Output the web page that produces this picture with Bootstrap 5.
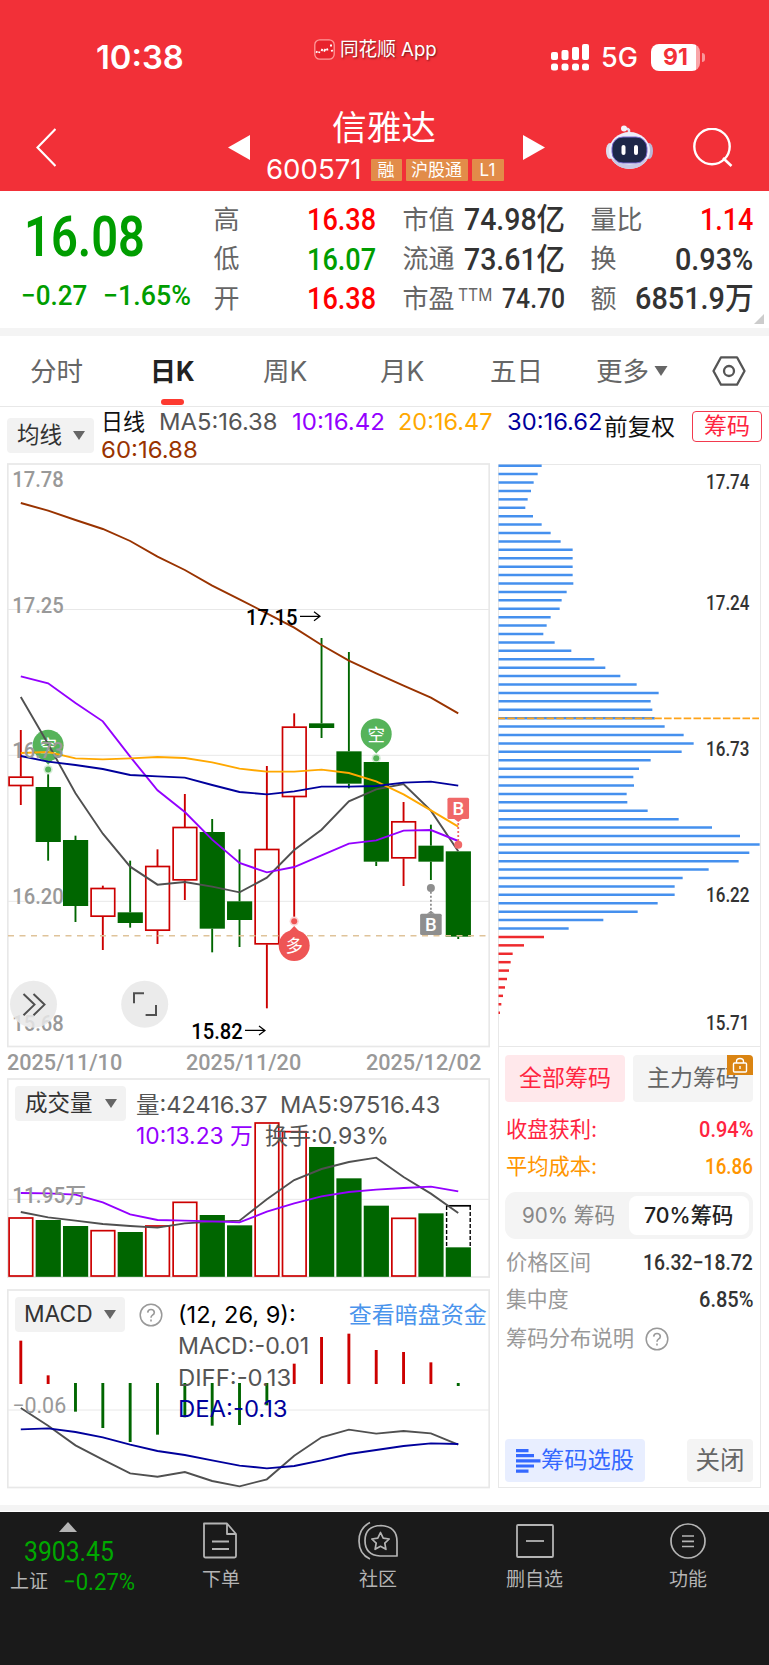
<!DOCTYPE html>
<html lang="zh-CN">
<head>
<meta charset="utf-8">
<meta name="viewport" content="width=device-width, initial-scale=1">
<title>信雅达 600571</title>
<link href="https://cdn.jsdelivr.net/npm/bootstrap@5.3.0/dist/css/bootstrap.min.css" rel="stylesheet">
<style>
  body{width:769px;margin:0;background:#fff;color:#333;font-family:"Inter","Noto Sans CJK SC",sans-serif;line-height:1;overflow-x:hidden}
  .din{font-family:"Roboto","Noto Sans CJK SC",sans-serif;font-weight:500}
  .fit{display:inline-block;white-space:nowrap;transform-origin:left center;flex:none}
  svg{display:block;flex:none}
  svg text{font-family:"Roboto","Noto Sans CJK SC",sans-serif}
  .top{background:#f23038;color:#fff;height:191px}
  .status{height:108px;padding-top:7px;display:grid;grid-template-columns:218px 237px 50px 50px auto;padding-left:96px;align-items:center}
  .time{font-size:32px;font-weight:600}
  .app{font-size:19px;margin-bottom:16px;gap:5px;text-shadow:1px 1px 2px #0008}
  .g5{font-size:27px;font-weight:500}
  .batt{width:49px;height:27px;border-radius:8px;background:linear-gradient(90deg,#fff 92%,#f9a5a8 92%);color:#f23038;font-size:23px;font-weight:700;line-height:27px}
  .cap{width:3px;height:9px;border-radius:0 4px 4px 0;background:#f9979b;margin-left:2px}
  .navrow{height:83px;display:grid;grid-template-columns:192px 38px 257px 83px 87px auto;padding-left:36px}
  .navrow>svg{align-self:center;margin-bottom:5px}
  .name{font-size:34px;line-height:40px;width:235px}
  .code{font-size:27px;line-height:24px;margin-top:10px}
  .tag{background:#e28c49;font-size:17px;line-height:22px;height:22px;text-align:center;border-radius:1px;flex:none}
  .up{color:#f00}.down{color:#009d00}
  .quote{height:137px;display:grid;grid-template-columns:193px 163px 163px 163px;padding-left:20.500px;position:relative}
  .quote .cols{padding-top:9px}
  .qrow{height:39.5px;display:flex;align-items:center;justify-content:space-between;font-size:26px;color:#666}
  .qrow .din{font-size:31px;color:#333}
  .qrow .up{color:#f00}.qrow .down{color:#009d00}
  .big{font-size:56px;line-height:60px;margin:16px 0 0 3px}
  .din.big{font-weight:600}
  .chg{font-size:28px;line-height:30px;margin-top:14px;gap:16px}
  .corner{position:absolute;right:5px;bottom:4px;border-left:10px solid transparent;border-bottom:10px solid #ccc}
  .band{background:#f4f4f4}
  .tabs{height:71px;border-bottom:1px solid #e8e8e8;display:grid;grid-template-columns:120px 113px 117px 110px 106px 116px auto;padding-left:30px;align-items:center;font-size:26.5px;color:#666}
  .tabs .on{color:#222;font-weight:700;position:relative}
  .tabs .on i{position:absolute;left:11px;bottom:-21px;width:23px;height:6px;border-radius:3px;background:#fd3a30}
  .marow{height:56px;padding:3px 7px 0 7px}
  .pick{background:#f2f2f2;border-radius:4px;height:35px;font-size:22.5px;color:#333;display:flex;align-items:center;justify-content:space-between;padding:0 9px 0 10px;flex:none}
  .malist{margin-left:7px;width:503px;font-size:23px;line-height:28px;color:#555}
  .adj{font-size:23px;color:#111;line-height:34px}
  .chip{margin-left:17px;width:70px;height:31px;border:1.5px solid #f23a4e;border-radius:4px;color:#ff2440;font-size:23px;line-height:28px;text-align:center;margin-top:1px}
  .left{width:483px}
  .dates{height:29px;font-size:22px;color:#999;line-height:27px;padding-right:9px}
  .pane{height:200px;position:relative}
  .pane>svg{position:absolute;left:0;top:0}
  .over{position:relative;padding:8px 0 0 8px;font-size:23px;color:#555}
  .lg{line-height:31.4px;margin-left:10px}
  .right{width:263px;margin-left:8px}
  .chipbox{border:1px solid #e8e8e8;border-top-width:1.5px;height:442px;padding:8px 7px 0 6px}
  .cb{height:47px;width:120px;border-radius:4px;font-size:23px;line-height:47px;text-align:center;background:#f4f4f4;color:#666;position:relative}
  .cb.on{background:#ffe8eb;color:#ff2440}
  .lock{position:absolute;right:0;top:0;width:26px;height:20px;background:#da8412;border-radius:0 4px 0 0}
  .kv{height:37px;font-size:21.5px;color:#999;padding:0 0 0 1px}
  .kv .din{color:#333;font-size:21.5px}
  .seg{height:47px;border-radius:11px;background:#f4f4f4;padding:4px;font-size:21.5px;color:#888}
  .seg>div{width:120px;line-height:39px;text-align:center;border-radius:8px}
  .seg>.on{background:#fff;color:#222;font-weight:500}
  .pickbtn{height:43px;border-radius:4px;background:#e8eeff;color:#3468ff;font-size:23px;width:140px;padding-left:11px}
  .closebtn{height:43px;border-radius:4px;background:#f4f4f4;color:#666;font-size:24.5px;width:66px}
  .foot{height:153px;background:#1a1a1a;color:#b4b4b4;font-size:19px}
  .foot .item{padding-top:8px}
  .foot .item span{margin-top:8px;line-height:24px}
</style>
</head>
<body>
<header class="top">
  <div class="status">
    <div class="time"><span class="fit" data-w="88">10:38</span></div>
    <div class="app d-flex align-items-center">
      <svg width="21" height="21" viewBox="0 0 21 21"><rect x=".8" y=".8" width="19.4" height="19.4" rx="5" fill="#e8222c" stroke="#ff9a9a" stroke-width="1.3"/><path d="M2 12.500l1.500 1M5 14l.5-1.500M7.500 12l1-2M10 12.500l1.500-2.500M13 9.500l.5 2M16 6.500h2M17.500 11l1 1.500" stroke="#fff" stroke-width="1.9" fill="none"/></svg>
      <span class="fit" data-w="97">同花顺 App</span>
    </div>
    <svg width="38" height="27" viewBox="0 0 38 27" fill="#fff"><rect x="0" y="8" width="7" height="8" rx="2"/><rect x="10.500" y="6" width="7" height="10" rx="2"/><rect x="21" y="3" width="7" height="13" rx="2"/><rect x="31" y="0" width="7" height="16" rx="2"/><rect x="0" y="19.500" width="7" height="7" rx="2.500"/><rect x="10.500" y="19.500" width="7" height="7" rx="2.500"/><rect x="21" y="19.500" width="7" height="7" rx="2.500"/><rect x="31" y="19.500" width="7" height="7" rx="2.500"/></svg>
    <div class="g5"><span class="fit" data-w="37">5G</span></div>
    <div class="d-flex align-items-center"><div class="batt text-center">91</div><div class="cap"></div></div>
  </div>
  <div class="navrow">
    <svg width="20" height="39" viewBox="0 0 20 39"><path d="M19.500 1L1.500 19.500l18 18.500" fill="none" stroke="#fff" stroke-width="2.200"/></svg>
    <svg width="22" height="25" viewBox="0 0 22 25"><path d="M22 0v25L0 12.500z" fill="#fff"/></svg>
    <div>
      <div class="name text-center"><span class="fit" data-w="104">信雅达</span></div>
      <div class="code d-flex align-items-center"><span class="fit" data-w="96">600571</span>
        <span class="tag" style="width:31px;margin-left:9px">融</span><span class="tag" style="width:62px;margin-left:4px">沪股通</span><span class="tag" style="width:32px;margin-left:4px">L1</span></div>
    </div>
    <svg width="22" height="25" viewBox="0 0 22 25"><path d="M0 0v25L22 12.500z" fill="#fff"/></svg>
    <svg width="47" height="44" viewBox="0 0 47 44"><path d="M23 9V5q-1-2-4-1" stroke="#e4e4f2" stroke-width="2.500" fill="none"/><circle cx="18" cy="3.500" r="3" fill="#f4f4fb"/><ellipse cx="4" cy="26" rx="4" ry="8" fill="#dcdcec"/><ellipse cx="43" cy="26" rx="4" ry="8" fill="#b9b9d8"/><ellipse cx="23.500" cy="25.500" rx="20.500" ry="18.500" fill="#eeeefa"/><path d="M5 33q18 13 37 0-6 11-18.500 11T5 33" fill="#c9c9e4"/><rect x="6" y="12" width="35" height="26" rx="11" fill="#1d2748" stroke="#7a6bd0"/><rect x="15.500" y="20" width="4" height="10" rx="2" fill="#fff"/><rect x="28" y="20" width="4" height="10" rx="2" fill="#fff"/></svg>
    <svg width="40" height="39" viewBox="0 0 40 39"><circle cx="19" cy="18.500" r="17.700" fill="none" stroke="#fff" stroke-width="2.400"/><path d="M30 30l8.500 8" stroke="#fff" stroke-width="2.600"/></svg>
  </div>
</header>

<section class="quote">
  <div>
    <div class="din down big"><span class="fit" data-w="121">16.08</span></div>
    <div class="din down chg d-flex"><span class="fit" data-w="66">−0.27</span><span class="fit" data-w="88">−1.65%</span></div>
  </div>
  <div class="cols" style="grid-column:2">
    <div class="qrow"><span>高</span><span class="din up fit" data-w="69">16.38</span></div>
    <div class="qrow"><span>低</span><span class="din down fit" data-w="69">16.07</span></div>
    <div class="qrow"><span>开</span><span class="din up fit" data-w="69">16.38</span></div>
  </div>
  <div class="cols" style="margin-left:26px;width:163px">
    <div class="qrow"><span>市值</span><span class="din fit" data-w="101">74.98亿</span></div>
    <div class="qrow"><span>流通</span><span class="din fit" data-w="101">73.61亿</span></div>
    <div class="qrow"><span>市盈</span><span class="fit" data-w="34" style="font-size:17px;margin-top:-7px;margin-left:3px">TTM</span><span class="din fit ms-auto" data-w="63" style="font-size:27.5px">74.70</span></div>
  </div>
  <div class="cols" style="margin-left:51px;width:163px">
    <div class="qrow"><span>量比</span><span class="din up fit" data-w="53">1.14</span></div>
    <div class="qrow"><span>换</span><span class="din fit" data-w="78">0.93%</span></div>
    <div class="qrow"><span>额</span><span class="din fit" data-w="119">6851.9万</span></div>
  </div>
  <i class="corner"></i>
</section>
<div class="band" style="height:8px"></div>

<nav class="tabs">
  <span>分时</span><span class="on"><span class="fit" data-w="45">日K</span><i></i></span><span>周K</span><span>月K</span><span>五日</span>
  <span class="d-flex align-items-center">更多<svg style="margin-left:5px" width="14" height="10" viewBox="0 0 14 10"><path d="M.5 0h13L7 10z" fill="#666"/></svg></span>
  <svg width="34" height="30" viewBox="0 0 34 30" fill="none" stroke="#555" stroke-width="2.300"><path d="M9 1.300h16L32.500 15 25 28.700H9L1.500 15z" stroke-linejoin="round"/><circle cx="17" cy="15" r="5"/></svg>
</nav>

<div class="marow d-flex align-items-start">
  <div class="pick" style="width:87px;margin-top:8px;padding-left:10px"><span class="fit" data-w="45">均线</span><svg width="12" height="9" viewBox="0 0 12 9"><path d="M0 0h12L6 9z" fill="#666"/></svg></div>
  <div class="malist">
    <div class="d-flex" style="margin-top:-2px"><span class="fit" data-w="44" style="color:#111;margin-right:14px">日线</span><span class="fit" data-w="119" style="margin-right:14px">MA5:16.38</span><span class="fit" data-w="93" style="color:#9400ff;margin-right:14px">10:16.42</span><span class="fit" data-w="95" style="color:#ffa800;margin-right:14px">20:16.47</span><span class="fit" data-w="96" style="color:#00009c">30:16.62</span></div>
    <div><span class="fit" data-w="97" style="color:#993300">60:16.88</span></div>
  </div>
  <div class="adj"><span class="fit" data-w="71">前复权</span></div>
  <div class="chip">筹码</div>
</div>

<main class="d-flex" style="padding-left:7px;height:1042px">
  <div class="left">
    <svg id="kline" width="483" height="586" viewBox="7 463 483 586"></svg>
    <div class="dates din d-flex justify-content-between"><span class="fit" data-w="115">2025/11/10</span><span class="fit" data-w="115">2025/11/20</span><span class="fit" data-w="115">2025/12/02</span></div>
    <div class="pane">
      <svg id="vol" width="483" height="200" viewBox="7 1078 483 200"></svg>
      <div class="over d-flex align-items-start">
        <div class="pick" style="width:111px"><span class="fit" data-w="68">成交量</span><svg width="12" height="9" viewBox="0 0 12 9"><path d="M0 0h12L6 9z" fill="#666"/></svg></div>
        <div class="lg" style="margin-top:4px">
          <div><span class="fit" data-w="132" style="margin-right:12px">量:42416.37</span><span class="fit" data-w="160">MA5:97516.43</span></div>
          <div><span class="fit" data-w="117" style="color:#9400ff;margin-right:12px">10:13.23 万</span><span class="fit" data-w="124">换手:0.93%</span></div>
        </div>
      </div>
    </div>
    <div class="pane" style="margin-top:11px">
      <svg id="macd" width="483" height="200" viewBox="7 1289 483 200"></svg>
      <div class="over d-flex align-items-start">
        <div class="pick" style="width:110px;padding-left:9px"><span class="fit" data-w="69">MACD</span><svg width="12" height="9" viewBox="0 0 12 9"><path d="M0 0h12L6 9z" fill="#666"/></svg></div>
        <svg style="margin:6px 0 0 14px" width="24" height="24" viewBox="0 0 24 24"><circle cx="12" cy="12" r="10.800" fill="none" stroke="#999" stroke-width="1.500"/><path d="M8.700 9.600Q8.900 6.500 12 6.500t3.300 2.900Q15.300 11 13.500 12.200 12 13.200 12 14.800M12 16.500v2" fill="none" stroke="#999" stroke-width="1.600"/></svg>
        <div class="lg" style="margin-left:15px;margin-top:3px;line-height:31.4px">
          <div class="d-flex"><span class="fit" data-w="118" style="color:#000;margin-right:53px">(12, 26, 9):</span><span class="fit" data-w="138" style="color:#4a94ec">查看暗盘资金</span></div>
          <div><span class="fit" data-w="131">MACD:-0.01</span></div>
          <div><span class="fit" data-w="113">DIFF:-0.13</span></div>
          <div><span class="fit" data-w="110" style="color:#00009c">DEA:-0.13</span></div>
        </div>
      </div>
    </div>
  </div>

  <div class="right">
    <svg id="chips" width="263" height="583" viewBox="498 463 263 583"></svg>
    <div class="chipbox d-flex flex-column">
      <div class="d-flex justify-content-between"><div class="cb on">全部筹码</div><div class="cb">主力筹码<span class="lock"><svg width="26" height="20" viewBox="0 0 26 20" fill="none" stroke="#fff" stroke-width="1.400"><rect x="6.500" y="8" width="13" height="9" rx="1"/><path d="M9.500 8V6.500Q9.500 3.500 13 3.500t3.500 3V8M13 11v3"/></svg></span></div></div>
      <div class="kv d-flex align-items-center justify-content-between" style="margin-top:9px;color:#ff2440"><span class="fit" data-w="91">收盘获利:</span><span class="din fit" data-w="54" style="color:#ff2440">0.94%</span></div>
      <div class="kv d-flex align-items-center justify-content-between" style="color:#ff9500"><span class="fit" data-w="91">平均成本:</span><span class="din fit" data-w="48" style="color:#ff9500">16.86</span></div>
      <div class="seg d-flex" style="margin-top:7px"><div><span class="fit" data-w="93">90% 筹码</span></div><div class="on"><span class="fit" data-w="89">70%筹码</span></div></div>
      <div class="kv d-flex align-items-center justify-content-between" style="margin-top:5px"><span class="fit" data-w="85">价格区间</span><span class="din fit" data-w="110">16.32−18.72</span></div>
      <div class="kv d-flex align-items-center justify-content-between"><span class="fit" data-w="63">集中度</span><span class="din fit" data-w="54">6.85%</span></div>
      <div class="kv d-flex align-items-center" style="margin-top:2px"><span class="fit" data-w="128">筹码分布说明</span><svg style="margin-left:11px" width="24" height="24" viewBox="0 0 24 24"><circle cx="12" cy="12" r="10.800" fill="none" stroke="#999" stroke-width="1.500"/><path d="M8.700 9.600Q8.900 6.500 12 6.500t3.300 2.900Q15.300 11 13.500 12.200 12 13.200 12 14.800M12 16.500v2" fill="none" stroke="#999" stroke-width="1.600"/></svg></div>
      <div class="d-flex justify-content-between mt-auto" style="margin-bottom:5px">
        <div class="pickbtn d-flex align-items-center"><svg width="25" height="24" viewBox="0 0 25 24" fill="#3468ff"><path d="M0 0h12.500v3.200H0zM0 5h18v3.200H0zM0 10.200h24.500v3.400H0zM0 15.400h18v3.200H0zM0 20.500h12.500v3.200H0z"/></svg><span class="fit" data-w="93">筹码选股</span></div>
        <div class="closebtn d-flex align-items-center justify-content-center">关闭</div>
      </div>
    </div>
  </div>
</main>
<div class="band" style="height:6px"></div>
<div style="height:1px"></div>
<footer class="foot d-flex">
  <div style="width:148px;padding:10px 0 0 10px">
    <svg style="margin-left:49px" width="18" height="10" viewBox="0 0 18 10"><path d="M9 0l9 10H0z" fill="#b4b4b4"/></svg>
    <div class="din" style="font-size:28px;line-height:30px;margin:5px 0 0 14px;font-weight:400;color:#00a800"><span class="fit" data-w="90">3903.45</span></div>
    <div class="d-flex align-items-center" style="line-height:28px;margin-top:1px"><span class="fit" data-w="38">上证</span><span class="din fit" data-w="72" style="font-size:24px;color:#00a800;margin-left:15px;font-weight:400">−0.27%</span></div>
  </div>
  <div class="item d-flex flex-column align-items-center" style="width:146px">
    <svg width="36" height="40" viewBox="0 0 36 40" fill="none" stroke="#b4b4b4" stroke-width="1.800" stroke-linejoin="round"><path d="M1 3.500h23L33 14v22q0 1.500-1.500 1.500h-29Q1 37.500 1 36zM24 3.500V14h9M9 21.500h17M9 29h17"/></svg><span>下单</span></div>
  <div class="item d-flex flex-column align-items-center" style="width:168px">
    <svg width="40" height="40" viewBox="0 0 40 40" fill="none" stroke="#b4b4b4" stroke-width="1.700" stroke-linejoin="round"><path d="M12 2.500Q1 8 1 21t11 18"/><path d="M23 5.500q16 1 16 16V36H22Q7 35 7 20.500T23 5.500zM22.500 12.500l2.700 5.700 6 .8-4.400 4.200 1.100 6.100-5.400-3-5.400 3 1.100-6.100-4.400-4.200 6-.8z"/></svg><span>社区</span></div>
  <div class="item d-flex flex-column align-items-center" style="width:145px">
    <svg width="38" height="40" viewBox="0 0 38 40" fill="none" stroke="#b4b4b4" stroke-width="1.800"><rect x="1" y="5" width="36" height="32" rx="1"/><path d="M10 21h18"/></svg><span>删自选</span></div>
  <div class="item d-flex flex-column align-items-center" style="width:162px">
    <svg width="36" height="40" viewBox="0 0 36 40" fill="none" stroke="#b4b4b4" stroke-width="1.700"><circle cx="18" cy="21" r="17"/><path d="M12 16h12M12 21.300h12M12 26.500h12"/></svg><span>功能</span></div>
</footer>

<script src="https://cdn.jsdelivr.net/npm/bootstrap@5.3.0/dist/js/bootstrap.bundle.min.js"></script>
<script>
  // Condense or widen each label to its column width.
  document.querySelectorAll('.fit').forEach(el => {
    const w = +el.dataset.w, n = el.offsetWidth, mr = parseFloat(getComputedStyle(el).marginRight) || 0;
    el.style.transform = `scaleX(${w / n})`;
    el.style.marginRight = (mr + w - n) + 'px';
  });

  const X = i => 20.8 + i * 27.34, RED = '#cc0000', GREEN = '#006600', GRID = '#e8e8e8';
  const line = (x1, y1, x2, y2, c, w, extra = '') => `<line x1="${x1}" y1="${y1}" x2="${x2}" y2="${y2}" stroke="${c}" stroke-width="${w}" ${extra}/>`;
  const path = (base, a, c) => `<polyline fill="none" stroke="${c}" stroke-width="1.9" points="${a.map((v, i) => X(i) + ',' + (base + v / 3)).join(' ')}"/>`;
  const frame = (y, h) => `<rect x="7.8" y="${y}" width="481.400" height="${h}" fill="none" stroke="${GRID}" stroke-width="1.7"/>`;
  const label = (s, x, y, w, c = '#999', size = 22, wt = 500) => `<text x="${x}" y="${y}" fill="${c}" font-size="${size}" font-weight="${wt}" textLength="${w}" lengthAdjust="spacingAndGlyphs">${s}</text>`;

  // Candles: [up, high, bodyTop, bodyBottom, low]
  const K = [[1,-30,110,138,195],[0,103,141,306,362],[0,287,300,498,546],[1,437,444,530,630],[0,362,517,549,563],[1,328,378,572,612],[1,162,261,421,480],[0,237,276,566,637],[0,328,484,540,621],[1,78,327,613,805],[1,-80,-40,171,530],[0,-306,-50,-36,-6],[0,-264,34,131,145],[0,66,66,365,378],[1,186,244,355,438],[0,254,317,365,420],[0,334,334,590,597]];
  let k = frame(464, 582.500);
  [609.5, 755.3, 901.3].forEach(y => k += line(8, y, 489, y, GRID, 1));
  K.forEach(([up, h, t, b, l], i) => {
    const x = X(i), [H, T, B, L] = [h, t, b, l].map(v => 740 + v / 3), c = up ? RED : GREEN;
    k += line(x, H, x, T, c, 1.9) + line(x, B, x, L, c, 1.9);
    k += up ? `<rect x="${x - 11.7}" y="${T + .5}" width="23.600" height="${B - T - 1}" fill="none" stroke="${c}" stroke-width="1.7"/>`
            : `<rect x="${x - 12.5}" y="${T}" width="25.200" height="${B - T}" fill="${c}"/>`;
  });
  k += line(8, 935.8, 489, 935.8, '#dfc39a', 1.4, 'stroke-dasharray="6 5.500"');
  const pin = (x, y, s, c, d) => `<path d="M${x - 7} ${y + d * 12}L${x} ${y + d * 19.5}L${x + 7} ${y + d * 12}z" fill="${c}"/><circle cx="${x}" cy="${y}" r="15.500" fill="${c}"/><circle cx="${x}" cy="${y + d * 24.3}" r="4.600" fill="${c}" opacity=".25"/><circle cx="${x}" cy="${y + d * 24.3}" r="3" fill="${c}"/><text x="${x}" y="${y + 6.5}" font-size="17.500" fill="#fff" text-anchor="middle">${s}</text>`;
  k += pin(X(1), 745.2, '空', '#56b35a', 1) + pin(X(13), 734, '空', '#56b35a', 1) + pin(X(10), 945.5, '多', '#ee5555', -1);
  k += path(740, [-711,-688,-660,-633,-597,-550,-510,-463,-422,-380,-337,-285,-238,-200,-163,-127,-80], '#993300');
  k += path(740, [-129,12,160,281,380,434,426,440,457,413,330,269,184,148,132,212,334], '#505050');
  k += path(740, [-191,-170,-111,-56,50,151,216,299,369,397,381,346,311,301,272,270,303], '#9400ff');
  k += path(740, [39,36,55,58,55,51,54,67,86,95,95,89,99,124,163,211,260], '#ffa800');
  k += path(740, [48,65,75,87,105,109,113,135,156,163,154,140,140,138,128,125,137], '#00009c');
  const bs = (x, y, c, dy, dot) => `<rect x="${x - 10.8}" y="${y}" width="21.600" height="21.400" rx="1.500" fill="${c}"/><path d="M${x - 4} ${dy}L${x} ${dy + (dot > y ? 3 : -3)}L${x + 4} ${dy}z" fill="${c}"/>` + line(x, dy, x, dot, c, 1.8, 'stroke-dasharray="2 2"') + `<circle cx="${x}" cy="${dot}" r="4" fill="${c}"/><text x="${x}" y="${y + 17.3}" font-size="18.500" font-weight="500" fill="#fff" text-anchor="middle">B</text>`;
  k += bs(X(16), 797.7, '#f06868', 819, 844.7) + bs(X(15), 913.7, '#8e8e8e', 913.7, 888);
  [['17.78',486.7],['17.25',612.9],['16.73',757.7],['16.20',904.4],['15.68',1030.8]].forEach(([s, y]) => k += label(s, 12.2, y, 51.5));
  const arrow = (x, y) => `<path d="M${x} ${y}h20m-6-4.500l6 4.500-6 4.500" fill="none" stroke="#000" stroke-width="1.2"/>`;
  k += label('17.15', 246, 624.7, 51.5, '#000') + arrow(300, 616.3) + label('15.82', 191.2, 1038.7, 51.5, '#000') + arrow(245, 1030.4);
  k += `<g fill="#e8e8e8" fill-opacity=".85"><circle cx="33.500" cy="1004.300" r="23.500"/><circle cx="144.700" cy="1004.300" r="23.500"/></g><g fill="none" stroke="#505050" stroke-width="2"><path d="M23.500 994l11 10.600-11 10.600M33.500 994l11 10.600-11 10.600M134 1003.300v-10h10M156 1005v10h-10.400"/></g>`;
  kline.innerHTML = k;

  // Volume: [up, top]
  const V = [[1,534],[0,540],[0,558],[1,572],[0,576],[1,558],[1,487],[0,525],[0,556],[1,249],[1,275],[0,321],[0,415],[0,497],[1,535],[0,520],[0,622]];
  let v = frame(1079, 198) + line(8, 1199.3, 489, 1199.3, GRID, 1);
  V.forEach(([up, t], i) => {
    const x = X(i), T = 1040 + t / 3;
    v += up ? `<rect x="${x - 11.7}" y="${T}" width="23.600" height="${1276 - T}" fill="none" stroke="${RED}" stroke-width="1.7"/>` : `<rect x="${x - 12.5}" y="${T}" width="25.200" height="${1276.8 - T}" fill="${GREEN}"/>`;
  });
  v += line(446, 1205.8, 471, 1205.8, '#000', 1.7) + line(446.6, 1206, 446.6, 1247, '#000', 1.4, 'stroke-dasharray="4 2"') + line(470.2, 1206, 470.2, 1247, '#000', 1.4, 'stroke-dasharray="4 2"');
  v += path(1040, [516,532,542,552,558,563,550,545,542,478,420,387,366,353,411,461,519], '#505050');
  v += path(1040, [459,460,464,487,523,540,542,544,547,515,490,469,456,449,444,440,454], '#9400ff');
  vol.innerHTML = v + label('11.95万', 12.2, 1202.7, 74);

  // MACD histogram ends
  let m = frame(1290, 197.500) + line(8, 1410, 489, 1410, GRID, 1);
  [182,286,395,444,486,464,412,437,435,376,251,171,161,210,216,247,318].forEach((e, i) => {
    const up = e < 309;
    m += line(X(i), 1280 + (up ? 312 : 309) / 3, X(i), 1280 + e / 3, up ? RED : GREEN, 2.9);
  });
  m += path(1280, [384,437,496,539,580,590,576,603,619,598,527,472,449,461,453,460,494], '#505050');
  m += path(1280, [448,445,456,472,494,513,525,541,557,565,558,541,522,510,498,490,492], '#00009c');
  macd.innerHTML = m + label('−0.06', 12.2, 1413.2, 54, '#999', 22, 400);

  // Cost distribution by price
  const C = [155,143,131,123,113,106,129,155,182,212,248,248,248,248,250,230,215,209,182,170,160,194,244,313,346,391,440,506,482,487,494,524,581,611,575,482,447,430,432,410,412,473,566,666,750,809,778,746,656,578,554,554,503,443,340,236,162,102,68,62,57,51,45,39,34,30];
  let c = `<path d="M498.500 1046V464.500H760.500V1046" fill="none" stroke="${GRID}"/>`;
  C.forEach((e, i) => { const y = 465.7 + i * 8.415; c += line(498.5, y, 490 + e / 3, y, i > 55 ? '#ee2a2e' : '#4590ee', 2.5); });
  c += line(497.5, 718.4, 759, 718.4, '#ffa31a', 1.8, 'stroke-dasharray="7.500 2.300"');
  [['17.74',489],['17.24',609.7],['16.73',755.9],['16.22',901.6],['15.71',1029.5]].forEach(([s, y]) => c += label(s, 706, y, 43.5, '#333', 19.5));
  chips.innerHTML = c;
</script>
</body>
</html>
